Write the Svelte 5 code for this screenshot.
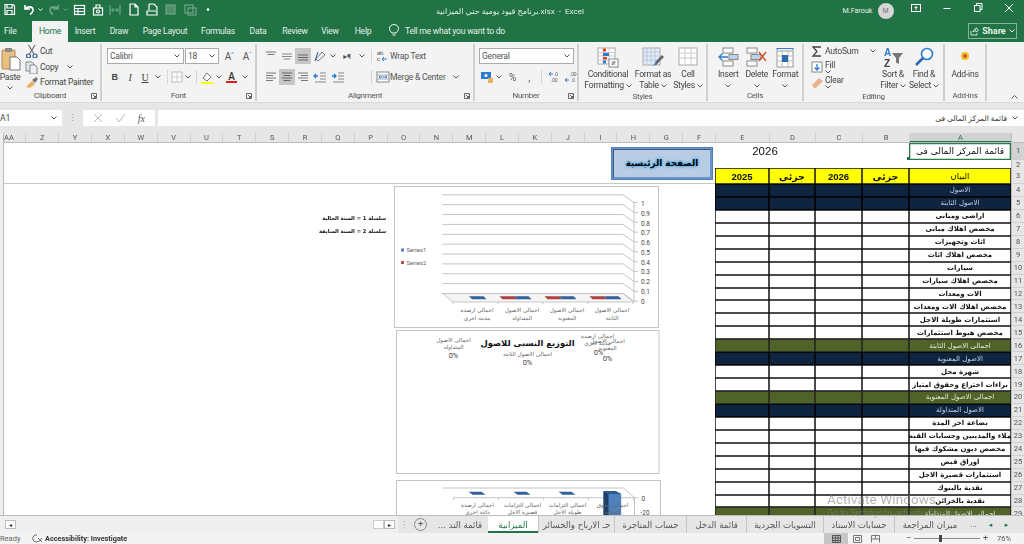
<script>
  const letters = ['A','B','C','D','E','F','G','H','I','J','K','L','M','N','O','P','Q','R','S','T','U','V','W','X','Y','Z','AA'];
  const rows = [
    ['navy','الاصول'],['navy','الاصول الثابتة'],['','اراضى ومبانى'],['','مخصص اهلاك مبانى'],['','اثاث وتجهيزات'],
    ['','مخصص اهلاك اثاث'],['','سيارات'],['','مخصص اهلاك سيارات'],['','الات ومعدات'],['','مخصص اهلاك الات ومعدات'],
    ['','استثمارات طويلة الاجل'],['','مخصص هبوط استثمارات'],['olive','اجمالى الاصول الثابتة'],['navy','الاصول المعنوية'],
    ['','شهرة محل'],['','براءات اختراع وحقوق امتياز'],['olive','اجمالى الاصول المعنوية'],['navy','الاصول المتداولة'],
    ['','بضاعة اخر المدة'],['','عملاء والمدينين وحسابات القبض'],['','مخصص ديون مشكوك فيها'],['','اوراق قبض'],
    ['','استثمارات قصيرة الاجل'],['','نقدية بالبنوك'],['','نقدية بالخزائن'],['olive','اجمالى الاصول المتداولة']
  ];
  const ticks = ['1','0.9','0.8','0.7','0.6','0.5','0.4','0.3','0.2','0.1','0'];
  const cats = [[477,'اجمالى ارصدة','مدينة اخرى'],[522,'اجمالى الاصول','المتداولة'],[567,'اجمالى الاصول','المعنوية'],[612,'اجمالى الاصول','الثابتة']];
  const cats3 = [[477,'اجمالى ارصدة','دائنة اخرى'],[522,'اجمالى التزامات','قصيرة الاجل'],[567,'اجمالى التزامات','طويلة الاجل'],[612,'اجمالى حقوق','الملكية']];
  const bars = [[469,0],[514,1],[559,1],[604,1]];
  const para = (x, w) => `${x},295.7 ${x+w},295.7 ${x+w+3},298.7 ${x+3},298.7`;

  const ic = {
    paste:'<rect x="1" y="3" width="13" height="19" rx="1" fill="#e8c080" stroke="#b08a50"/><rect x="4" y="1" width="7" height="4" fill="#8a8a8a"/><path d="M9 10h7l3 3v10H9z" fill="#fff" stroke="#777"/>',
    cut:'<circle cx="3.5" cy="12" r="2" fill="none" stroke="#2b579a" stroke-width="1.2"/><circle cx="10" cy="12" r="2" fill="none" stroke="#2b579a" stroke-width="1.2"/><path d="M4.5 10 10 1M9 10 3.500 1" stroke="#666" stroke-width="1.1" fill="none"/>',
    copy:'<path d="M1 2h6l2 2v7H1z" fill="#dfe6f0" stroke="#888"/><path d="M5 5h5l2 2v7H5z" fill="#eef2f8" stroke="#888"/>',
    painter:'<path d="M1 12 7 6l3 3-5 4z" fill="#e8b060"/><path d="M7 5 11 2l2 2-3 4z" fill="#777"/>',
    tl:'<path d="M2 3h10M3.500 5.500h7" stroke="#777"/>', tm:'<path d="M2 5h10M2 7.500h10M3.500 10h7" stroke="#888"/>', tb:'<path d="M2 6h10M2 8.500h10M2 11h10" stroke="#666"/>',
    al:'<path d="M2 3h10M2 5.500h7M2 8h10M2 10.500h7" stroke="#777"/>', ac:'<path d="M2 3h10M3.500 5.500h7M2 8h10M3.500 10.500h7" stroke="#666"/>', ar:'<path d="M2 3h10M5 5.500h7M2 8h10M5 10.500h7" stroke="#777"/>',
    orient:'<path d="M3 10 9 3l3 3-7 6z" fill="none" stroke="#777"/><path d="M2 12l3-9" stroke="#2b579a"/>',
    indL:'<path d="M7 3h6M7 6h6M7 9h6M2 12h11" stroke="#888"/><path d="M1 6h4M3 4 1 6l2 2" stroke="#2b7cd3" fill="none" stroke-width="1.300"/>',
    indR:'<path d="M7 3h6M7 6h6M7 9h6M2 12h11" stroke="#888"/><path d="M1 6h4M3 4l2 2-2 2" stroke="#2b7cd3" fill="none" stroke-width="1.300"/>',
    border:'<rect x="2" y="2" width="10" height="10" fill="#fff" stroke="#bbb"/><path d="M7 2v10M2 7h10" stroke="#ccc"/>',
    fill:'<path d="M3 8 7 3l4 4-4 4z" fill="#fff" stroke="#777"/><rect x="1" y="12" width="12" height="2" fill="#ffff00"/>',
    wrap:'<text x="1" y="6" font-size="6" fill="#555" font-family="Liberation Sans">ab</text><text x="1" y="12" font-size="6" fill="#555" font-family="Liberation Sans">c</text><path d="M6 10h5M8 8l-2 2 2 2" stroke="#2b7cd3" fill="none"/>',
    merge:'<rect x="1" y="2" width="12" height="10" fill="#fff" stroke="#888"/><path d="M1 5h12M1 9h12" stroke="#aaa"/><path d="M3 7h8M4.500 5.500 3 7l1.500 1.500M9.500 5.500 11 7 9.500 8.500" stroke="#2b7cd3" fill="none"/>',
    acct:'<rect x="1" y="2" width="10" height="7" fill="#2b7cd3"/><circle cx="6" cy="5.500" r="1.500" fill="#fff"/><path d="M8 8h5v5H8z" fill="#e8b060"/>',
    inc:'<path d="M1 4h4M3 2 1 4l2 2" stroke="#2b7cd3" fill="none"/><text x="6" y="6" font-size="5" fill="#555" font-family="Liberation Sans">.0</text><text x="3" y="12" font-size="5" fill="#555" font-family="Liberation Sans">.00</text>',
    dec:'<path d="M1 10h4M3 8 1 10l2 2" stroke="#2b7cd3" fill="none"/><text x="6" y="6" font-size="5" fill="#555" font-family="Liberation Sans">.00</text><text x="7" y="12" font-size="5" fill="#555" font-family="Liberation Sans">.0</text>',
    cond:'<rect x="1" y="1" width="17" height="16" fill="#fff" stroke="#aaa"/><path d="M1 5.500h17M1 9h17M1 13h17M6 1v16M12 1v16" stroke="#ccc"/><rect x="6" y="1.500" width="3" height="3" fill="#e04020"/><rect x="6" y="6" width="6" height="3" fill="#2b7cd3"/><rect x="6" y="10" width="4" height="2.500" fill="#e04020"/><rect x="6" y="13.500" width="3" height="3" fill="#2b7cd3"/><rect x="12" y="12" width="9" height="8" fill="#fff" stroke="#888"/><path d="M14.500 15h4M14.500 17h4M18 14l-3 4" stroke="#555" fill="none" stroke-width=".7"/>',
    table:'<rect x="1" y="1" width="17" height="17" fill="#e4edf7" stroke="#aaa"/><path d="M1 5h17M1 9h17M1 13h17M5 1v17M9 1v17M13 1v17" stroke="#b8c8dc"/><path d="M13 15 20 8l2 2-7 7z" fill="#666"/><path d="M11 19l3-4 2 2z" fill="#3a78b8"/>',
    cell:'<rect x="1" y="1" width="18" height="17" fill="#fff" stroke="#aaa"/><path d="M1 6h18M1 11h18M7 1v17M13 1v17" stroke="#ccc"/>',
    insert:'<rect x="5" y="1" width="10" height="5" fill="#fff" stroke="#888"/><rect x="5" y="14" width="10" height="5" fill="#fff" stroke="#888"/><rect x="11" y="7.500" width="9" height="5" fill="#bcd3ec" stroke="#888"/><path d="M10 10H1M4.500 6.500 1 10l3.500 3.500" stroke="#2b7cd3" fill="none" stroke-width="1.300"/>',
    del:'<rect x="1" y="1" width="10" height="5" fill="#fff" stroke="#888"/><rect x="1" y="14" width="10" height="5" fill="#fff" stroke="#888"/><rect x="5" y="7.500" width="10" height="5" fill="#bcd3ec" stroke="#888"/><path d="M13 5l7 9M20 5l-7 9" stroke="#d0502a" stroke-width="1.300"/>',
    format:'<rect x="2" y="4" width="16" height="16" fill="#fff" stroke="#999"/><path d="M2 9h16M2 14h16M7 4v16M13 4v16" stroke="#bbb"/><rect x="7" y="8" width="6" height="7" fill="#2b6cb0"/><path d="M2 1.500h16M2 1v2M18 1v2" stroke="#2b7cd3"/>',
    sum:'<path d="M11 3H3l4 4.500L3 12h8" fill="none" stroke="#444" stroke-width="1.300"/>',
    fillb:'<rect x="2" y="2" width="10" height="10" fill="#fff" stroke="#888"/><path d="M7 4v6M4.500 7.500 7 10l2.500-2.500" stroke="#2b7cd3" fill="none" stroke-width="1.300"/>',
    clear:'<path d="M2 10 9 3l4 3-7 7H4z" fill="#eab38c"/>',
    find:'<circle cx="13" cy="7" r="5.500" fill="#fff" stroke="#2b7cd3" stroke-width="1.600"/><path d="M9 11 2 18" stroke="#2b6cb0" stroke-width="2.600"/>',
    addin:'<circle cx="6" cy="6" r="4" fill="#f0c030"/><circle cx="6" cy="6" r="1.800" fill="#d04020"/>'
  };
</script>

{#snippet I(name, w = 14, h = 14)}
  <svg class="i" width={w} height={h} viewBox="0 0 {w} {h}">{@html ic[name]}</svg>
{/snippet}
{#snippet v()}<svg class="chev" width="6" height="4" viewBox="0 0 6 4"><path d="M.5.500 3 3 5.500.500" fill="none" stroke="#555"/></svg>{/snippet}

<div class="app">
  <header class="title">
    <svg class="qat" width="220" height="21" viewBox="0 0 220 21">
      <g fill="none" stroke="#fff" stroke-width="1.200">
        <path d="M5 4.500h8l1.500 1.500v8.500h-9.500z"/><path d="M7 5v3h5V5M7 14v-3.500h5V14"/>
        <path d="M25 5v4h5M25 9c2-3 8-3 8 1 0 2-1.500 3.500-3 4.500" stroke-width="1.600"/>
        <path d="M38.500 8.500 40.500 10.500 42.500 8.500" stroke-width="1"/>
        <g opacity=".35"><path d="M58 5v4h-5M58 9c-2-3-8-3-8 1 0 2 1.500 3.500 3 4.500" stroke-width="1.600"/><path d="M63.500 8.500 65.500 10.500 67.500 8.500" stroke-width="1"/></g>
        <rect x="74.500" y="5.500" width="10" height="9"/><path d="M74.500 8.500h10M74.500 11.500h10M78 8.500v6"/>
        <rect x="93.500" y="8" width="9" height="7"/><path d="M96 8V5h4v3"/><circle cx="98" cy="11.500" r="1.500"/>
        <g opacity=".35"><path d="M110 5v10M120 5v10M110 10h10M113 8v4M117 8v4"/><rect x="166" y="5" width="9" height="9" fill="#fff" fill-opacity=".6"/><rect x="185" y="5" width="8" height="8"/><rect x="188" y="8" width="8" height="7"/></g>
        <path d="M130 4h5l3 3v8h-8zM135 4v3h3"/><path d="M149 4h5l3 3v3M149 4v6M147 11h10v4h-10z"/>
      </g>
      <circle cx="208" cy="9.500" r="1.300" fill="#fff"/>
    </svg>
    <span class="doc">برنامج قيود يومية حتي الميزانية.xlsx  -  Excel</span>
    <div class="win">
      <span class="user">M.Farouk</span>
      <span class="avatar">M</span>
      <svg width="124" height="21" viewBox="0 0 124 21" fill="none" stroke="#fff"><rect x="11.500" y="4.500" width="9" height="7"/><path d="M16 10V6.500M14.500 8l1.500-1.500L17.500 8"/><path d="M43.500 8.500h7"/><rect x="74.500" y="5.500" width="5.500" height="6"/><path d="M76.500 5.500V3.500h5.500v6H80"/><path d="M105 4l8 8M113 4l-8 8"/></svg>
    </div>
  </header>

  <nav class="tabs">
    <span class="file">File</span><span class="on">Home</span><span>Insert</span><span>Draw</span><span>Page Layout</span><span>Formulas</span><span>Data</span><span>Review</span><span>View</span><span>Help</span>
    <span class="tell"><svg width="10" height="13" viewBox="0 0 10 13" fill="none" stroke="#fff"><path d="M3 9C1 7 .5 5.500 .5 4.500a4.500 4 0 0 1 9 0C9.500 5.500 9 7 7 9zM3.500 11h3"/></svg><b>Tell me what you want to do</b></span>
    <span class="share"><svg width="9" height="9" viewBox="0 0 9 9" fill="none" stroke="#fff" stroke-width=".8"><path d="M1 4v4h6V6M3 5c0-2 2-3 3-3V.8L8.500 3 6 5V3.800C5 3.800 4 4 3 5z"/></svg><b>Share</b><svg width="6" height="4" viewBox="0 0 6 4"><path d="M.5.500 3 3 5.500.500" fill="none" stroke="#fff"/></svg></span>
  </nav>

  <section class="ribbon">
    <div class="group clip">
      <div class="body">
        <div class="bigb paste">{@render I('paste',20,24)}<span>Paste</span>{@render v()}</div>
        <div class="stack">
          <div class="li">{@render I('cut')}<span>Cut</span></div>
          <div class="li">{@render I('copy')}<span>Copy</span><em>{@render v()}</em></div>
          <div class="li">{@render I('painter')}<span>Format Painter</span></div>
        </div>
      </div>
      <div class="gl">Clipboard<svg class="exp" width="6" height="6" viewBox="0 0 6 6" fill="none" stroke="#666"><path d="M.5 5.500v-5h5v5zM2 2l2.500 2.500M4.500 3v1.500H3"/></svg></div>
    </div>

    <div class="group font">
      <div class="body two">
        <div class="r fr1">
          <span class="sel">Calibri{@render v()}</span><span class="sel">18{@render v()}</span>
          <span class="ga">A<sup>^</sup></span><span class="ga">A<sup>ˇ</sup></span>
        </div>
        <div class="r fr2">
          <b class="ser">B</b><i class="ser">I</i><u class="ser">U</u>{@render v()}<s class="sep"></s>{@render I('border')}{@render v()}<s class="sep"></s>{@render I('fill')}{@render v()}<span class="fa">A</span>{@render v()}
        </div>
      </div>
      <div class="gl">Font<svg class="exp" width="6" height="6" viewBox="0 0 6 6" fill="none" stroke="#666"><path d="M.5 5.500v-5h5v5zM2 2l2.500 2.500M4.500 3v1.500H3"/></svg></div>
    </div>

    <div class="group align">
      <div class="body two">
        <div class="r ar1">
          {@render I('tl')}{@render I('tm')}<span class="act">{@render I('tb')}</span>{@render I('orient')}{@render v()}<span class="rt">▸¶</span>{@render v()}<s class="sep"></s>{@render I('wrap')}<span class="tx">Wrap Text</span>
        </div>
        <div class="r ar2">
          {@render I('al')}<span class="act">{@render I('ac')}</span>{@render I('ar')}{@render I('indL')}{@render I('indR')}<span></span><span></span><s class="sep"></s>{@render I('merge')}<span class="tx">Merge &amp; Center</span>{@render v()}
        </div>
      </div>
      <div class="gl">Alignment<svg class="exp" width="6" height="6" viewBox="0 0 6 6" fill="none" stroke="#666"><path d="M.5 5.500v-5h5v5zM2 2l2.500 2.500M4.500 3v1.500H3"/></svg></div>
    </div>

    <div class="group number">
      <div class="body two">
        <div class="r nr1"><span class="sel">General{@render v()}</span></div>
        <div class="r nr2">{@render I('acct')}{@render v()}<span class="pc">%</span><span class="pc">,</span><s class="sep"></s>{@render I('inc')}{@render I('dec')}</div>
      </div>
      <div class="gl">Number<svg class="exp" width="6" height="6" viewBox="0 0 6 6" fill="none" stroke="#666"><path d="M.5 5.500v-5h5v5zM2 2l2.500 2.500M4.500 3v1.500H3"/></svg></div>
    </div>

    <div class="group styles">
      <div class="body bigs">
        <div class="bigb">{@render I('cond',22,21)}<span>Conditional</span><span>Formatting {@render v()}</span></div>
        <div class="bigb">{@render I('table',23,21)}<span>Format as</span><span>Table {@render v()}</span></div>
        <div class="bigb">{@render I('cell',20,21)}<span>Cell</span><span>Styles {@render v()}</span></div>
      </div>
      <div class="gl">Styles</div>
    </div>

    <div class="group cells">
      <div class="body bigs">
        <div class="bigb">{@render I('insert',21,21)}<span>Insert</span>{@render v()}</div>
        <div class="bigb">{@render I('del',21,21)}<span>Delete</span>{@render v()}</div>
        <div class="bigb">{@render I('format',21,21)}<span>Format</span>{@render v()}</div>
      </div>
      <div class="gl">Cells</div>
    </div>

    <div class="group edit">
      <div class="body">
        <div class="stack es">
          <div class="li">{@render I('sum')}<span>AutoSum</span><em>{@render v()}</em></div>
          <div class="li">{@render I('fillb')}<span>Fill {@render v()}</span></div>
          <div class="li">{@render I('clear')}<span>Clear {@render v()}</span></div>
        </div>
        <div class="bigb sort"><svg class="i" width="21" height="21" viewBox="0 0 21 21"><text x="1" y="9" font-size="10" font-weight="700" fill="#2b7cd3" font-family="Liberation Sans">A</text><text x="1" y="20" font-size="10" font-weight="700" fill="#444" font-family="Liberation Sans">Z</text><path d="M9 6h11l-4 5v6l-3-1.500V11z" fill="#777"/></svg><span>Sort &amp;</span><span>Filter {@render v()}</span></div>
        <div class="bigb findb">{@render I('find',20,21)}<span>Find &amp;</span><span>Select {@render v()}</span></div>
      </div>
      <div class="gl">Editing</div>
    </div>

    <div class="group addins">
      <div class="body bigs"><div class="bigb add">{@render I('addin',12,12)}<span>Add-ins</span></div></div>
      <div class="gl">Add-ins</div>
    </div>
    <div class="collapse"><svg width="7" height="4" viewBox="0 0 7 4"><path d="M.5 3.500 3.500.5l3 3" fill="none" stroke="#555"/></svg></div>
  </section>

  <section class="fbar">
    <div class="name"><span>A1</span>{@render v()}</div>
    <span class="dots">⋮</span>
    <div class="btns">
      <svg width="10" height="10" viewBox="0 0 10 10"><path d="M1 1l8 8M9 1 1 9" stroke="#bbb" fill="none"/></svg>
      <svg width="11" height="10" viewBox="0 0 11 10"><path d="M1 5l3 4 6-8" stroke="#bbb" fill="none"/></svg>
      <i>fx</i>
    </div>
    <div class="input"><span dir="rtl">قائمة المركز المالى فى</span>{@render v()}</div>
  </section>

  <section class="sheet">
    <div class="strip"></div>
    <div class="grid" dir="rtl">
      <div class="row heads">
        <span class="corner"></span>
        {#each letters as l, i}<span class="ch" class:cur={i === 0}>{l}</span>{/each}
      </div>
      <div class="row r1">
        <span class="rh cur">1</span><span class="a1" dir="rtl">قائمة المركز المالى فى</span><span></span><span></span><span class="y26">2026</span><i class="handle"></i>
      </div>
      <div class="row r2"><span class="rh">2</span></div>
      <div class="row r3">
        <span class="rh">3</span><span class="y">البيان</span><span class="y b">جزئى</span><span class="y b">2026</span><span class="y b">جزئى</span><span class="y b">2025</span><span class="rest"></span>
      </div>
      {#each rows as [kind, label], i}
        <div class="row data {kind}">
          <span class="rh">{i + 4}</span><span class="c lab">{label}</span><span class="c"></span><span class="c"></span><span class="c"></span><span class="c"></span>
        </div>
      {/each}
    </div>

    <button class="home">الصفحة الرئيسية</button>
    <div class="note" dir="rtl"><b>سلسلة 1 = السنة الحالية</b><b>سلسلة 2 = السنة السابقة</b></div>

    <svg class="chart c1" viewBox="394 185.500 265 142">
      <rect x="394.500" y="186" width="264" height="141" fill="#fff" stroke="#c4c4c4"/>
      <path d="M442.300 293H623L634 301.500H453z" fill="#f4f4f4" stroke="#c8c8c8"/>
      {#each ticks as t, i}
        <path d="M442.300 {194.300 + i * 9.87}H623L634 {202 + i * 9.87}H638" fill="none" stroke="#c4c4c4"/>
        <text x="641" y={205.500 + i * 9.77} class="tk">{t}</text>
      {/each}
      <path d="M634 202V301.500" stroke="#c4c4c4"/>
      {#each [453,498,543,588,633] as x}<path d="M{x} 301.500v2" stroke="#c4c4c4"/>{/each}
      {#each bars as [x, r]}
        {#if r}<polygon points={para(x - 14.500, 14.500)} fill="#b04040"/>{/if}
        <polygon points={para(x, 14.500)} fill="#30619c"/>
      {/each}
      <rect x="401" y="248" width="3" height="3" fill="#4f81bd"/><text x="406.500" y="251.500" class="lg">Series1</text>
      <rect x="401" y="260.500" width="3" height="3" fill="#c0504d"/><text x="406.500" y="264" class="lg">Series2</text>
      {#each cats as [x, a, b]}
        <text x={x} y="311" class="cat">{a}</text><text x={x} y="319" class="cat">{b}</text>
      {/each}
    </svg>

    <svg class="chart c2" viewBox="395.500 329.500 264 144">
      <rect x="396" y="330" width="262.500" height="143" fill="#fff" stroke="#c4c4c4"/>
      <text x="527" y="345" class="pt">التوزيع النسبى للاصول</text>
      <text x="453" y="341" class="cat">اجمالى الاصول</text><text x="453" y="348" class="cat">المتداولة</text><text x="453" y="357" class="pc0">0%</text>
      <text x="527" y="355" class="cat">اجمالى الاصول الثابتة</text><text x="527" y="364" class="pc0">0%</text>
      <text x="597" y="337" class="cat">اجمالى ارصدة</text><text x="597" y="344" class="cat">مدينة اخرى</text><text x="598" y="354" class="pc0">0%</text>
      <text x="607" y="342" class="cat">اجمالى الاصول</text><text x="607" y="349" class="cat">المعنوية</text><text x="607" y="360" class="pc0">0%</text>
    </svg>

    <svg class="chart c3" viewBox="395.500 480 265 60">
      <rect x="396" y="480.500" width="264" height="59" fill="#fff" stroke="#c4c4c4"/>
      <path d="M442.300 488H623L634 497.700H638M453 497.700H634V515M453 497.700V500M498 497.700V500M543 497.700V500M588 497.700V500M633 497.700V500" fill="none" stroke="#c4c4c4"/>
      {#each [469,514,559] as x}<polygon points="{x-1},491.700 {x+12},491.700 {x+16},494.700 {x+3},494.700" fill="#30619c"/>{/each}
      <polygon points="603,491 615,491 620.700,494 620.700,520 603,520" fill="#4f81bd"/>
      <polygon points="603,491 608,494 608,520 603,520" fill="#1f3f6a"/>
      <polygon points="603,491 615,491 620.700,494 608,494" fill="#2c5a92"/>
      <text x="641" y="500.500" class="tk">0</text><text x="640" y="515" class="tk">-20</text>
      {#each cats3 as [x, a, b]}
        <text x={x} y="507" class="cat">{a}</text><text x={x} y="514" class="cat">{b}</text>
      {/each}
    </svg>
  </section>

  <footer class="tabbar">
    <div class="hscroll">
      <span class="sb">◂</span><span class="track"></span><span class="thumb"></span><span class="sb">▸</span>
    </div>
    <span class="dots2">⋮</span>
    <span class="plus">+</span>
    <div class="sheets" dir="rtl">
      <span></span><span class="nav">▸</span><span class="nav">◂</span><span class="more">...</span>
      <span class="st">ميزان المراجعة</span><span class="st">حسابات الاستاذ</span><span class="st">التسويات الجردية</span><span class="st">قائمة الدخل</span><span class="st">حساب المتاجرة</span><span class="st">حـ الارباح والخسائر</span><span class="st active">الميزانية</span><span class="st last">قائمة التد ...</span>
    </div>
  </footer>

  <footer class="status">
    <span class="ready">Ready</span>
    <svg width="11" height="9" viewBox="0 0 11 9" fill="none" stroke="#444" stroke-width=".8"><path d="M5 1a3.500 3.500 0 1 0 1 6.500"/><path d="M6 4l1.500 1.500L10 8M10 4 6.500 8"/></svg>
    <b>Accessibility: Investigate</b>
    <span class="views">
      <span class="vw act2"><svg width="9" height="8" viewBox="0 0 9 8" fill="none" stroke="#555"><path d="M.5.500h8v7h-8zM3.300.500v7M6 .500v7M.5 3h8M.5 5.500h8"/></svg></span>
      <span class="vw"><svg width="9" height="8" viewBox="0 0 9 8" fill="none" stroke="#777"><path d="M.5.500h8v7h-8zM2.500 2.500h4v3h-4z"/></svg></span>
      <span class="vw"><svg width="9" height="8" viewBox="0 0 9 8" fill="none" stroke="#777"><path d="M.5 7.500v-7h8v7M.5 4h8M4.500.5V4"/></svg></span>
    </span>
    <span class="zoomer">
      <span class="zs">−</span>
      <span class="slider"><i></i></span>
      <span class="zs">+</span>
      <span class="pct">76%</span>
    </span>
  </footer>

  <div class="wm"><span class="w1">Activate Windows</span><span class="w2">Go to Settings to activate Windows.</span></div>
</div>

<style>
  :global(body){margin:0;background:#fff}
  .app{position:relative;width:1024px;height:544px;overflow:hidden;display:flex;flex-direction:column;font-family:Roboto,"DejaVu Sans",sans-serif;font-size:8.600px;color:#444;filter:blur(.3px)}
  svg{display:block;flex:none}
  s{text-decoration:none}
  .title{height:21px;background:#217346;display:flex;align-items:center;color:#fff;position:relative}
  .qat{position:absolute;left:0;top:0}
  .doc{position:absolute;left:424px;width:172px;text-align:center;font-size:8.100px;color:#dfeee5;white-space:pre}
  .win{margin-left:auto;display:flex;align-items:center}
  .user{font-size:7.200px;margin-right:5px;color:#e6efe9}
  .avatar{width:16px;height:16px;border-radius:50%;background:#d6d6d6;color:#777;font-size:7px;display:flex;align-items:center;justify-content:center;margin-right:6.500px}

  .tabs{height:21px;background:#217346;display:grid;grid-template-columns:32px 36px 34px 34px 58px 48px 32px 42px 28px 38px 124px 1fr;align-items:stretch;color:#e4f0e9;font-size:8.600px;letter-spacing:-.25px}
  .tabs>span{display:flex;align-items:center;justify-content:center;padding-bottom:2px;box-sizing:border-box}
  .tabs .file{justify-content:flex-start;padding-left:4px}
  .tabs .on{background:#f3f3f3;color:#217346}
  .tell{justify-content:flex-start!important;gap:6px;padding-left:7px}
  .tell b{font-weight:400;white-space:nowrap}
  .tabs .share{justify-self:end;width:49px;height:16px;margin:2px 7px 0 0;border:1px solid #86b399;gap:3px;font-size:9px;padding:0;letter-spacing:0}

  .ribbon{height:61px;background:#f3f3f3;display:flex;border-bottom:1px solid #dadada;box-sizing:border-box;position:relative;letter-spacing:-.25px}
  .group{display:flex;flex-direction:column;flex:none;box-sizing:border-box;border-right:2px solid #cfcfcf;margin:2px 0 1px;position:relative}
  .clip{width:102px}.font{width:155px}.align{width:218px}.number{width:104px}.styles{width:129px}.cells{width:96px}.edit{width:141px}.addins{width:42px}
  .body{height:47px;display:flex}
  .gl{text-align:center;height:11px;line-height:11px;font-size:8px;color:#555;position:relative}
  .exp{position:absolute;right:3px;top:3px}
  .bigb{display:flex;flex-direction:column;align-items:center;line-height:11px;white-space:nowrap;flex:none}
  .bigb .i{margin:0 0 1px}
  .bigb>.chev{margin-top:4px}
  .bigb span .chev{display:inline-block;vertical-align:middle}
  .paste{width:20px;padding-top:3px}
  .paste .i{margin:0 0 1px 1px}
  .paste .chev{margin-top:3px}
  .stack{display:flex;flex-direction:column;margin-top:-.5px}
  .li{height:15.500px;display:flex;align-items:center;gap:1px;white-space:nowrap}
  .li em{margin-left:8px}
  .clip .stack{margin-left:5px}
  .two{flex-direction:column;padding-top:4px;box-sizing:border-box}
  .r{display:grid;align-items:center;justify-items:center;height:16px}
  .r+.r{margin-top:5px}
  .sel{background:#fff;border:1px solid #ababab;box-sizing:border-box;height:16px;display:flex;align-items:center;justify-content:space-between;padding:0 3px 0 2px;width:100%;color:#555}
  .sep{display:block;width:1px;height:14px;background:#d6d6d6}
  .font .r{margin-left:5px}
  .fr1{grid-template-columns:77px 34px 18px 16px;gap:0 1px;justify-content:start}
  .ga{font-size:10px;color:#555}
  .ga sup{font-size:6px;color:#2b7cd3;line-height:0}
  .fr2{grid-template-columns:15px 16px 14px 11px 8px 11px 11px 6px 16px 8px 17px 10px;justify-content:start}
  .ser{font-family:"Liberation Serif","Liberation Sans",serif;font-size:10px;color:#444;text-decoration-thickness:1px}
  b.ser{font-family:"Liberation Sans",sans-serif;font-size:9px}
  .fa{font-size:10px;font-weight:500;color:#333;border-bottom:2px solid #e02020;line-height:9px;width:11px;text-align:center}
  .align .r{margin-left:6px}
  .ar1{grid-template-columns:16px 16px 16px 18px 8px 20px 10px 9px 14px 70px;justify-content:start}
  .ar2{grid-template-columns:16px 16px 16px 18px 18px 10px 10px 9px 14px 61px 9px;justify-content:start}
  .act{background:#c6c6c6;width:16px;height:16px;display:flex;align-items:center;justify-content:center}
  .rt{font-size:8px;color:#555}
  .tx{justify-self:start;white-space:nowrap;color:#555}
  .number .r{margin-left:4px}
  .nr1{grid-template-columns:95px}
  .nr2{grid-template-columns:15px 10px 17px 16px 9px 17px 16px;justify-content:start}
  .pc{font-size:10px;color:#555}
  .bigs{padding-top:3px;box-sizing:border-box}
  .styles .bigs{padding-left:4px}
  .styles .bigb:nth-child(1){width:50px}.styles .bigb:nth-child(2){width:40px}.styles .bigb:nth-child(3){width:30px}
  .cells .bigs{padding-left:6px}
  .cells .bigb{width:28.500px}
  .es{width:75px;flex:none;padding-left:6px;box-sizing:border-box}
  .es .li em{margin-left:10px}
  .sort{width:28px;padding-top:3px}
  .findb{width:34px;padding-top:3px}
  .add{width:40px}
  .add .i{margin:3px 0 7px}
  .collapse{position:absolute;right:6px;bottom:3px}

  .fbar{height:30px;background:#e6e6e6;display:flex;align-items:flex-start;padding-top:7px;box-sizing:border-box;flex:none}
  .name{width:62px;height:16px;background:#fff;display:flex;align-items:center;justify-content:space-between;padding-right:5px;box-sizing:border-box}
  .dots{width:21px;text-align:center;color:#999;line-height:15px}
  .btns{width:72px;height:16px;background:#fff;display:flex;align-items:center;justify-content:space-around;box-sizing:border-box;padding:0 4px}
  .btns i{font-family:"Liberation Serif",serif;font-size:10px;color:#555}
  .input{margin-left:3px;flex:1;height:16px;background:#fff;display:flex;align-items:center;justify-content:flex-end;gap:5px;padding-right:6px;box-sizing:border-box;font-size:7.500px;color:#333}

  .sheet{height:382px;position:relative;display:flex;flex:none;overflow:hidden;background:#fff}
  .strip{width:3px;background:#efefef;border-right:1px solid #b8b8b8;flex:none}
  .grid{flex:1;overflow:hidden;position:relative;min-width:0}
  .row{display:grid;grid-template-columns:13px 102px 47px 47px 46px 54px repeat(21,32.850px) 1fr;width:1020px}
  .heads{height:10px;background:#e6e6e6;box-sizing:border-box;border-bottom:1px solid #bdbdbd}
  .ch{font-size:7.500px;text-align:center;line-height:9px;color:#555;border-left:1px solid #d0d0d0}
  .ch:last-child{text-align:left;border:0}
  .ch.cur{background:#d2d2d2;color:#217346;box-shadow:inset 0 -1px #217346}
  .corner{background:#e6e6e6;border-left:1px solid #bdbdbd}
  .rh{background:#e6e6e6;border-left:1px solid #bdbdbd;border-bottom:1px solid #d0d0d0;box-sizing:border-box;font-size:7.500px;text-align:center;display:flex;align-items:center;justify-content:center;color:#555}
  .rh.cur{background:#d2d2d2;color:#217346}
  .r1{height:16.500px;position:relative}.r2{height:8.500px}.r3{height:16px}
  .a1{box-sizing:border-box;box-shadow:inset 0 0 0 1.300px #2c7a50;font-family:"DejaVu Sans",sans-serif;font-size:9px;color:#111;display:flex;align-items:center;justify-content:center;white-space:nowrap;overflow:hidden}
  .handle{position:absolute;left:903px;top:14px;width:3px;height:3px;background:#217346}
  .y26{grid-column:5 / 7;font-family:"Liberation Sans",sans-serif;font-size:11.500px;color:#111;display:flex;align-items:center;justify-content:center}
  .y{background:#ff0;font-family:"DejaVu Sans",sans-serif;font-size:8.500px;color:#111;display:flex;align-items:center;justify-content:center;box-shadow:inset 0 0 0 .75px #111}
  .y.b{font-family:"Liberation Sans","DejaVu Sans",sans-serif;font-weight:700;font-size:9.500px}
  .rest{grid-column:7 / -1;border-bottom:1px solid #c8c8c8}
  .data{height:12.950px}
  .c{box-sizing:border-box;box-shadow:inset 0 0 0 .75px #111;background:#fff}
  .lab{font-family:"DejaVu Sans",sans-serif;font-weight:700;font-size:7px;color:#111;display:flex;align-items:center;justify-content:center;white-space:nowrap;overflow:hidden}
  .navy .c{background:#0f243e;box-shadow:inset 0 0 0 .75px #000}
  .navy .lab{color:#c6d4e6;font-weight:400}
  .olive .c{background:#4f6228;box-shadow:inset 0 0 0 .75px #222}
  .olive .lab{color:#e4ead4;font-weight:400}

  .home{position:absolute;left:611px;top:13.700px;width:102px;height:33.500px;box-sizing:border-box;border:3px ridge #6a95c8;background:#b8cce4;font-family:"DejaVu Sans",sans-serif;font-weight:700;font-size:8.800px;color:#000;text-shadow:0 0 3px #3fa9e8,0 0 3px #3fa9e8;padding:0;outline:1px solid #4f81bd;outline-offset:-1px}
  .note{position:absolute;right:638px;top:79px;display:flex;flex-direction:column;font-family:"DejaVu Sans",sans-serif;font-size:5.200px;line-height:13px;color:#111;align-items:flex-start}
  .chart{position:absolute;display:block}
  .c1{left:394px;top:52.500px;width:265px;height:142px}
  .c2{left:395.500px;top:196.500px;width:264px;height:144px}
  .c3{left:395.500px;top:347px;width:265px;height:60px}
  .tk{font-family:Roboto,sans-serif;font-size:6.500px;fill:#444}
  .lg{font-family:Roboto,sans-serif;font-size:6px;fill:#666}
  .cat{font-family:"DejaVu Sans",sans-serif;font-size:5.600px;fill:#666;text-anchor:middle}
  .pt{font-family:"DejaVu Sans",sans-serif;font-size:8.400px;font-weight:700;fill:#111;text-anchor:middle}
  .pc0{font-family:Roboto,sans-serif;font-size:7.500px;fill:#444;text-anchor:middle}

  .tabbar{height:18px;background:#e6e6e6;display:flex;align-items:stretch;flex:none;border-top:1px solid #bdbdbd;box-sizing:border-box}
  .hscroll{width:398px;flex:none;display:flex;align-items:flex-start;padding:4px 3px 0 5px;box-sizing:border-box;background:#efefef}
  .sb{width:11px;height:9px;background:#fff;border:1px solid #bbb;box-sizing:border-box;font-size:6px;line-height:7px;text-align:center;color:#222;font-family:"DejaVu Sans",sans-serif}
  .track{flex:1}
  .thumb{width:11px;height:9px;background:#fff;border:1px solid #ccc;box-sizing:border-box}
  .dots2{width:12px;text-align:center;color:#aaa;line-height:17px;flex:none}
  .plus{width:11px;height:11px;border:1px solid #888;border-radius:50%;margin:2px 5px 0 4px;font-size:9px;line-height:10px;text-align:center;color:#555;flex:none;box-sizing:content-box}
  .sheets{flex:1;display:grid;grid-template-columns:10px 15px 17px 17px 71px 71px 77px 60px 72px 76px 50px 1fr;min-width:0}
  .sheets span{display:flex;align-items:center;justify-content:center;white-space:nowrap;overflow:hidden}
  .nav{font-size:7px;color:#217346;font-family:"DejaVu Sans",sans-serif}
  .more{font-size:8px;color:#555}
  .st{font-family:"DejaVu Sans",sans-serif;font-size:8.600px;color:#555;border-left:1px solid #c4c4c4}
  .st.active{background:#fff;color:#217346;box-shadow:inset 0 -2px #217346;border:0}
  .st.last{border:0}

  .status{height:11px;background:#f3f3f3;display:flex;align-items:center;font-size:7.500px;flex:none;position:relative;color:#333}
  .ready{width:32px;color:#666}
  .status>svg{margin-right:1px}
  .status>b{margin-left:1px;font-weight:700;font-size:7.300px}
  .views{position:absolute;left:824px;top:0;display:flex}
  .vw{width:18px;height:11px;display:flex;align-items:center;justify-content:center}
  .act2{width:24px;background:#c6c6c6}
  .zoomer{position:absolute;left:905px;top:0;display:flex;align-items:center;height:11px}
  .zs{width:7px;text-align:center;font-size:9px;line-height:9px;color:#555}
  .slider{width:66px;height:1px;background:#888;margin:0 2px;position:relative;display:block}
  .slider i{position:absolute;left:25px;top:-3px;width:3px;height:7px;background:#444}
  .pct{margin-left:8px;color:#555}
  .wm{position:absolute;left:827px;top:490px;display:flex;flex-direction:column;pointer-events:none}
  .w1{font-size:13.500px;color:rgba(130,130,130,.6);line-height:18px;letter-spacing:.1px}
  .w2{font-size:8.800px;color:rgba(150,150,150,.4);line-height:11px}
</style>
